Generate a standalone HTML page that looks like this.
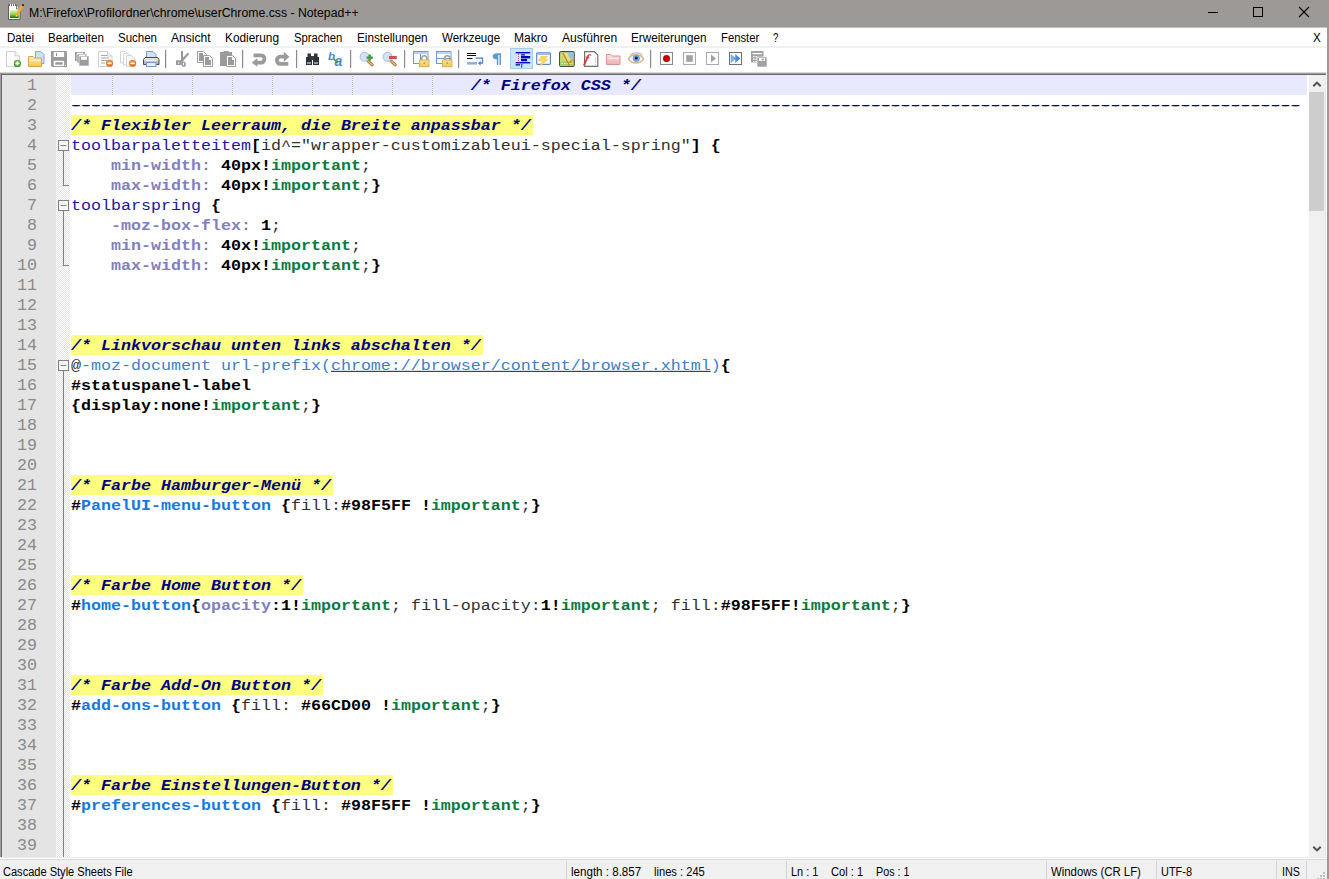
<!DOCTYPE html>
<html lang="de">
<head>
<meta charset="utf-8">
<title>userChrome.css - Notepad++</title>
<style>
html,body{margin:0;padding:0;}
body{width:1329px;height:879px;position:relative;overflow:hidden;background:#fff;font-family:"Liberation Sans",sans-serif;font-size:12px;color:#000;}
.abs{position:absolute;}
#titlebar{left:0;top:0;width:1329px;height:28px;background:linear-gradient(to bottom,#9d9996 0,#9d9996 27px,#c6c3c1 27px,#c6c3c1 28px);}
#title{left:0;top:0;width:600px;height:27px;}
#title span{position:absolute;top:5px;line-height:16px;white-space:nowrap;display:inline-block;transform-origin:0 50%;}
#menubar{left:0;top:28px;width:1327px;height:20px;background:#fff;}
#menubar span{position:absolute;top:2px;line-height:16px;white-space:nowrap;display:inline-block;transform-origin:0 50%;}
#menusep{left:0;top:46px;width:1327px;height:2px;background:#f1f1f1;}
#toolbar{left:0;top:49px;width:1327px;height:23px;background:#fff;}
#rborder{left:1327px;top:27px;width:2px;height:852px;background:#9d9996;}
#edborder-top{left:0;top:72px;width:1326px;height:3px;background:linear-gradient(to bottom,#d8d8d8 0,#d8d8d8 1px,#a0a0a0 1px,#a0a0a0 2px,#696969 2px,#696969 3px);}
#edborder-left{left:0;top:73px;width:2px;height:784px;background:linear-gradient(to right,#a0a0a0 0,#a0a0a0 1px,#696969 1px,#696969 2px);}
#lnmargin{left:2px;top:75px;width:54px;height:782px;background:#e4e4e4;}
#foldmargin{left:56px;top:75px;width:14px;height:782px;background-color:#fff;background-image:conic-gradient(#fff 25%,#e4e4e4 0 50%,#fff 0 75%,#e4e4e4 0);background-size:2px 2px;}
#code{left:70px;top:75px;width:1237px;height:782px;overflow:hidden;background:#fff;}
#curline{left:1px;top:0;width:1236px;height:20px;background:#e8e8ff;}
.ig{position:absolute;top:0;width:1px;height:20px;background:repeating-linear-gradient(to bottom,#fff 0,#fff 1px,#bcbcbc 1px,#bcbcbc 2px);}
.ln{position:absolute;left:2px;width:35px;text-align:right;height:20px;line-height:22px;overflow:hidden;font-family:"Liberation Mono",monospace;font-size:16.6667px;color:#8a8a8a;}
.l{position:absolute;left:1px;height:20px;line-height:22px;transform:scaleY(0.87);transform-origin:0 15px;white-space:pre;font-family:"Liberation Mono",monospace;font-size:16.6667px;color:#000;}
.l span{display:inline-block;height:20px;line-height:22px;vertical-align:top;}
.c{color:#000080;font-weight:bold;font-style:italic;}
.cb{position:absolute;left:1px;height:20px;background:#ffff80;}
.c1{color:#000080;font-weight:bold;font-style:italic;}
.t{color:#1818a0;}
.dash{color:#000080;text-shadow:-1.5px 0 0 #000080,1.5px 0 0 #000080;}
.o{font-weight:bold;color:#000;}
.v{font-weight:bold;color:#000;}
.a{color:#303030;}
.n{color:#303030;}
.i{color:#8080c0;font-weight:bold;}
.p{color:#6c6c9c;}
.m{color:#0a7a40;font-weight:bold;}
.s{color:#303030;}
.d{color:#3c80c8;}
.u{color:#3c80c8;text-decoration:underline;text-decoration-color:#000;}
.k{color:#1478dc;font-weight:bold;}
#vscroll{left:1309px;top:75px;width:17px;height:782px;background:linear-gradient(to right,#f0f0f0 0,#f0f0f0 16px,#e6e6e6 16px,#e6e6e6 17px);}
#vthumb{left:1309px;top:92px;width:15px;height:119px;background:#cdcdcd;}
#statusline{left:0;top:857px;width:1327px;height:3px;background:linear-gradient(to bottom,#ececec 0,#ececec 1px,#fff 1px,#fff 2px,#dadada 2px,#dadada 3px);}
#statusbar{left:0;top:860px;width:1327px;height:19px;background:#f0f0f0;}
#statusbar span{position:absolute;top:4px;line-height:16px;white-space:nowrap;display:inline-block;transform-origin:0 50%;}
.ssep{position:absolute;top:1px;width:1px;height:18px;background:#d4d4d4;}
</style>
</head>
<body>
<div id="titlebar" class="abs"></div>
<div id="title" class="abs"><span style="left:29.0px;transform:scaleX(1.0211)">M:\Firefox\Profilordner\chrome\userChrome.css - Notepad++</span></div>
<svg class="abs" style="left:0;top:0" width="1329" height="28" viewBox="0 0 1329 28">
<defs><linearGradient id="gNpp" x1="0" y1="0" x2="0" y2="1"><stop offset="0" stop-color="#e8f4c0"/><stop offset="0.55" stop-color="#8cd63c"/><stop offset="1" stop-color="#146c08"/></linearGradient></defs>
<path d="M8.500 5.500h8l3.500 3.500v10.500h-11.500z" fill="#fff" stroke="#5c5c5c"/>
<path d="M16.500 5.500v3.500h3.500" fill="#e8e8e8" stroke="#5c5c5c" stroke-width="0.800"/>
<path d="M8.500 5.500v-1h8" fill="none" stroke="#6c6c6c"/><path d="M10.500 4v2.500M12.500 4v2.500M14.500 4v2.500" stroke="#fff" stroke-width="1"/>
<rect x="10" y="10" width="8.800" height="8" fill="url(#gNpp)"/>
<path d="M16.300 15.800l5.800-9.600" stroke="#eeb02c" stroke-width="2.600"/>
<path d="M15.600 17l0.500-2l1.300 0.800z" fill="#f4dca0"/>
<rect x="22" y="4" width="2" height="2" rx="0.600" fill="#a00808"/>
<path d="M1208 12.500h10" stroke="#000" stroke-width="1"/>
<rect x="1253.500" y="7.500" width="9" height="9" fill="none" stroke="#000" stroke-width="1"/>
<path d="M1299 7l10 10M1309 7l-10 10" stroke="#000" stroke-width="1.100"/>
</svg>
<div id="menubar" class="abs"><span style="left:7.2px;transform:scaleX(0.9636)">Datei</span><span style="left:48.2px;transform:scaleX(0.9630)">Bearbeiten</span><span style="left:117.8px;transform:scaleX(0.9582)">Suchen</span><span style="left:171.3px;transform:scaleX(1.0086)">Ansicht</span><span style="left:225.3px;transform:scaleX(0.9868)">Kodierung</span><span style="left:294.2px;transform:scaleX(0.9401)">Sprachen</span><span style="left:357.0px;transform:scaleX(0.9797)">Einstellungen</span><span style="left:442.0px;transform:scaleX(0.9606)">Werkzeuge</span><span style="left:514.3px;transform:scaleX(1.0048)">Makro</span><span style="left:561.9px;transform:scaleX(1.0073)">Ausführen</span><span style="left:631.3px;transform:scaleX(0.9756)">Erweiterungen</span><span style="left:721.2px;transform:scaleX(0.9413)">Fenster</span><span style="left:773.0px;transform:scaleX(0.7922)">?</span><span style="left:1313.0px;transform:scaleX(0.9726)">X</span></div>
<div id="menusep" class="abs"></div>
<div id="toolbar" class="abs"><svg class="abs" style="left:0;top:0;overflow:visible" width="800" height="23" viewBox="0 49 800 23">
<defs>
<linearGradient id="gFolder" x1="0" y1="0" x2="0" y2="1"><stop offset="0" stop-color="#fdf0b4"/><stop offset="1" stop-color="#f2c64a"/></linearGradient>
<linearGradient id="gPink" x1="0" y1="0" x2="0" y2="1"><stop offset="0" stop-color="#fbe0e0"/><stop offset="1" stop-color="#eeb0b0"/></linearGradient>
<linearGradient id="gLock" x1="0" y1="0" x2="0" y2="1"><stop offset="0" stop-color="#fae596"/><stop offset="1" stop-color="#efc656"/></linearGradient>
<linearGradient id="gPrn" x1="0" y1="0" x2="0" y2="1"><stop offset="0" stop-color="#f0f0f0"/><stop offset="1" stop-color="#a8a8a8"/></linearGradient>
<radialGradient id="gGreen" cx="0.5" cy="0.35" r="0.7"><stop offset="0" stop-color="#8ed06a"/><stop offset="1" stop-color="#2e8420"/></radialGradient>
<radialGradient id="gOrange" cx="0.5" cy="0.35" r="0.7"><stop offset="0" stop-color="#f8a050"/><stop offset="1" stop-color="#dc5c10"/></radialGradient>
<linearGradient id="gBlueTri" x1="0" y1="0" x2="1" y2="0"><stop offset="0" stop-color="#9cc4f4"/><stop offset="1" stop-color="#2868c8"/></linearGradient>
</defs>
<!-- 1 new -->
<g>
<path d="M6.5 51.5h8.5l4.5 4.5v10.5h-13z" fill="#fdfdfd" stroke="#cfcfcf"/>
<path d="M15 51.5v4.5h4.5" fill="#f0f0f0" stroke="#cfcfcf"/>
<circle cx="17.4" cy="63.4" r="3.6" fill="url(#gGreen)"/>
<path d="M15.4 63.4h4M17.4 61.4v4" stroke="#fff" stroke-width="1.5"/>
</g>
<!-- 2 open -->
<g>
<path d="M35.5 51.5h5.5l3 3v9h-8.500z" fill="#cfe2fa" stroke="#7ea6e0"/>
<path d="M28.500 66.500v-10h4.500l1.500 1.500h7v8.500z" fill="url(#gFolder)" stroke="#d9a441"/>
<path d="M29.500 60.500h11.500" stroke="#fdf4c8"/>
</g>
<!-- 3 save -->
<g>
<path d="M51 51h15l1 1v15h-15l-1-1z" fill="#9b9b9b"/>
<rect x="53.700" y="52" width="10.400" height="5" fill="#fff"/>
<rect x="56" y="53" width="1" height="3" fill="#8a8a8a"/>
<rect x="53.700" y="60.800" width="10.400" height="5.200" fill="#fff"/>
<rect x="55.300" y="62.200" width="7.400" height="2.500" fill="#9b9b9b"/>
<rect x="65" y="65" width="1" height="1" fill="#fff"/>
</g>
<!-- 4 save all -->
<g fill="#9b9b9b">
<rect x="75" y="52" width="10" height="9"/>
<rect x="77" y="54" width="10" height="9" stroke="#fff" stroke-width="0.600"/>
<rect x="79" y="56" width="10" height="10" stroke="#fff" stroke-width="0.600"/>
<rect x="77" y="52.800" width="6" height="1.200" fill="#fff"/>
<rect x="79" y="54.800" width="6" height="1.200" fill="#fff"/>
<rect x="81" y="56.800" width="6" height="3" fill="#fff"/>
</g>
<!-- 5 close -->
<g>
<path d="M98.500 51.500h9l4.500 4.500v10.500h-13.500z" fill="#fdfdfd" stroke="#cfcfcf"/>
<path d="M107.500 51.500v4.500h4.500" fill="#f0f0f0" stroke="#cfcfcf"/>
<path d="M101 55.500h6M101 58h8M101 60.500h6M101 63h4" stroke="#a8a8a8"/>
<circle cx="109.500" cy="63.300" r="3.500" fill="url(#gOrange)"/>
<rect x="107.400" y="62.600" width="4.200" height="1.500" fill="#fff"/>
</g>
<!-- 6 close all -->
<g>
<path d="M120.500 51.500h5l3 3v8.500h-8z" fill="#fdfdfd" stroke="#d4d4d4"/>
<path d="M123.500 53.500h5l3 3v8.500h-8z" fill="#fdfdfd" stroke="#d4d4d4"/>
<path d="M126.500 55.500h5l3.500 3.500v7.500h-8.500z" fill="#fdfdfd" stroke="#d4d4d4"/>
<circle cx="132.600" cy="63.300" r="3.500" fill="url(#gOrange)"/>
<rect x="130.500" y="62.600" width="4.200" height="1.500" fill="#fff"/>
</g>
<!-- 7 print -->
<g>
<path d="M146.500 58v-6.500h6.500l3 3v3.500z" fill="#cfe2fa" stroke="#6e9ad6"/>
<path d="M145 57.500h12.500l1.500 2v5h-15.500v-5z" fill="url(#gPrn)" stroke="#4a4a4a"/>
<rect x="146.500" y="62.500" width="9.500" height="4" fill="#e4f0fc" stroke="#6e9ad6"/>
<path d="M146 60.500h10.500" stroke="#fff"/>
</g>
<rect x="165" y="50" width="1.200" height="18" fill="#8a8a8a"/>
<!-- 8 cut -->
<g fill="#9b9b9b">
<rect x="181" y="51" width="2" height="10.500"/>
<path d="M187.900 52.600l1.300 1.300l-8.200 9.600l-2.200-1.800z"/>
<path d="M176 60.200h3.500l1.800 1.800v3h-5.300zM178 62.200v1.200h1.300v-1.200z" fill-rule="evenodd"/>
<path d="M181.300 61.500h3l1.500 1.500v2.800l-1 1h-2l-1.500-1.500zM182.900 62.800v2.200h1.200v-2.200z" fill-rule="evenodd"/>
</g>
<!-- 9 copy -->
<g>
<path d="M197.500 51.500h6l3 3v8h-9z" fill="#fff" stroke="#9b9b9b"/>
<path d="M199 53h4v3h2v5h-6z" fill="#9b9b9b"/>
<path d="M203.500 55.500h6l3 3v8h-9z" fill="#fff" stroke="#9b9b9b"/>
<path d="M205 57h4v3h2v5h-6z" fill="#9b9b9b"/>
</g>
<!-- 10 paste -->
<g>
<path d="M220 52h3.500v-1h5.200v1h3.300v14h-12z" fill="#9b9b9b"/>
<path d="M226.500 55.500h6l3 3v8h-9z" fill="#fff" stroke="#9b9b9b"/>
<path d="M228 57h4v3h2v5h-6z" fill="#9b9b9b"/>
</g>
<rect x="242" y="50" width="1.200" height="18" fill="#8a8a8a"/>
<!-- 11 undo -->
<g fill="#9b9b9b">
<path d="M253.500 53.500H261.500A4.800 5.500 0 0 1 261.500 64.500H256.500V60.700H261A1.600 1.700 0 0 0 261 57.300H253.500z"/>
<path d="M251.800 62.600l5.600-4.400v8.800z"/>
</g>
<!-- 12 redo -->
<g fill="#9b9b9b">
<path d="M286 54.800H280A5 5.500 0 0 0 280 65.800H288.300V62H280.500A1.600 1.700 0 0 1 280.500 58.600H286z"/>
<path d="M289.400 56.700l-5.600-5v10z"/>
</g>
<rect x="296" y="50" width="1.200" height="18" fill="#8a8a8a"/>
<!-- 13 find -->
<g>
<path d="M307.500 53.500h3.500v3.500h-3.500zM314 53.500h3.500v3.500h-3.500z" fill="#30363c"/>
<path d="M306 57h6v8h-6zM313 57h6v8h-6z" fill="#2c3238"/>
<rect x="311" y="56" width="3" height="4" fill="#3a4048"/>
<path d="M307 62h4v2h-4zM314 62h4v2h-4z" fill="#8c98a8"/>
</g>
<!-- 14 replace -->
<g font-family="Liberation Sans,sans-serif" font-weight="bold" font-style="italic" fill="#4a88d8">
<text x="328" y="59.500" font-size="11.500">b</text>
<text x="334.500" y="66.300" font-size="14">a</text>
<path d="M333.500 58.500l3.500 3.500" stroke="#3c9c3c" stroke-width="1.600"/>
<path d="M338.200 63.200l-3.400-0.800 2.600-2.600z" fill="#3c9c3c"/>
</g>
<rect x="350" y="50" width="1.200" height="18" fill="#8a8a8a"/>
<!-- 15 zoom in -->
<g>
<path d="M368 61l4.200 3.800" stroke="#9a6a30" stroke-width="3" stroke-linecap="round"/>
<path d="M368 61l4.200 3.800" stroke="#e4b070" stroke-width="1.600" stroke-linecap="round"/>
<circle cx="364.600" cy="56.800" r="4.500" fill="#d4e2f8" stroke="#a4bce4"/>
<path d="M366.500 57.600h6.400M369.700 54.400v6.400" stroke="#3c9c3c" stroke-width="2.400"/>
</g>
<!-- 16 zoom out -->
<g>
<path d="M391 61l4.200 3.800" stroke="#9a6a30" stroke-width="3" stroke-linecap="round"/>
<path d="M391 61l4.200 3.800" stroke="#e4b070" stroke-width="1.600" stroke-linecap="round"/>
<circle cx="387.600" cy="56.800" r="4.500" fill="#d4e2f8" stroke="#a4bce4"/>
<rect x="389.400" y="56.200" width="7" height="2.600" fill="#e04848" stroke="#c03030" stroke-width="0.500"/>
</g>
<rect x="404" y="50" width="1.200" height="18" fill="#8a8a8a"/>
<!-- 17 sync v -->
<g>
<rect x="413.500" y="51.500" width="14.500" height="12" fill="#fff" stroke="#6e9ad6"/>
<rect x="414" y="52" width="13.500" height="2" fill="#bcd4f4"/>
<path d="M420.500 54v9.500" stroke="#6e9ad6"/>
<path d="M421.800 60v-1.800a2.500 2.500 0 0 1 5 0v1.800" fill="none" stroke="#a4a4a4" stroke-width="1.600"/>
<rect x="419.500" y="60" width="9.500" height="6.800" fill="url(#gLock)" stroke="#d8a83c" stroke-width="0.800"/>
<rect x="423.500" y="62.300" width="1.600" height="1.600" fill="#c89430"/>
</g>
<!-- 18 sync h -->
<g>
<rect x="436.500" y="51.500" width="14.500" height="12" fill="#fff" stroke="#6e9ad6"/>
<rect x="437" y="52" width="13.500" height="2" fill="#bcd4f4"/>
<path d="M436.500 58.500h14.500" stroke="#6e9ad6"/>
<path d="M444.800 60v-1.800a2.500 2.500 0 0 1 5 0v1.800" fill="none" stroke="#a4a4a4" stroke-width="1.600"/>
<rect x="442.500" y="60" width="9.500" height="6.800" fill="url(#gLock)" stroke="#d8a83c" stroke-width="0.800"/>
<rect x="446.500" y="62.300" width="1.600" height="1.600" fill="#c89430"/>
</g>
<rect x="458" y="50" width="1.200" height="18" fill="#8a8a8a"/>
<!-- 19 wrap -->
<g>
<path d="M467 53.500h9M467 55.500h9M467 58.500h5.500" stroke="#101010" stroke-width="1"/>
<rect x="467" y="62" width="10" height="2.600" fill="#8cb0e4"/>
<path d="M475.500 58.200h7v5h-3" fill="none" stroke="#4c7cc8" stroke-width="1.200"/>
<path d="M478 63.200l2.600-2.400v4.800z" fill="#4c7cc8"/>
</g>
<!-- 20 pilcrow -->
<g fill="#5b9bd5">
<path d="M497 53.500h4v1.500h-4z"/>
<path d="M497.200 53.500v5.700a3 2.850 0 0 1 0-5.700z"/>
<path d="M495.700 53.500h1.500v5.700h-1.500a2.900 2.850 0 0 1 0-5.700z"/>
<rect x="496.800" y="53.500" width="1.500" height="11.500"/>
<rect x="499.500" y="53.500" width="1.500" height="11.500"/>
</g>
<!-- 21 indent guide (active) -->
<g>
<rect x="510.500" y="48.500" width="22" height="20" fill="#cce4f7" stroke="#a4cdf0"/>
<g fill="#0000c0">
<rect x="515.700" y="52" width="14.500" height="1.400"/>
<rect x="521" y="54.300" width="4" height="1.200"/>
<rect x="521" y="56" width="9.200" height="2.400"/>
<rect x="521" y="59" width="6" height="2.200"/>
<rect x="515.700" y="62" width="14.500" height="1.400"/>
<rect x="515.700" y="64.200" width="4.300" height="1.300"/>
<rect x="521" y="64.200" width="1.400" height="1.300"/>
<rect x="521" y="66.200" width="1.200" height="1.200"/>
</g>
<path d="M518.500 54v8" stroke="#e0487c" stroke-width="1" stroke-dasharray="1 1"/>
</g>
<!-- 22 UDL -->
<g>
<rect x="536.700" y="52.800" width="13.700" height="11.500" rx="0.800" fill="#fff" stroke="#6288c4" stroke-width="1.200"/>
<rect x="537.300" y="53.400" width="12.500" height="1.500" fill="#8eb6ee"/>
<path d="M548 56h-7l-3 5h4.500l-2.700 5.200l8.700-6.700h-3.500z" fill="#f6d962" stroke="#eec850" stroke-width="0.400"/>
</g>
<!-- 23 doc map -->
<g>
<rect x="559.600" y="51.600" width="14.600" height="14.800" rx="1.500" fill="#dfe47c" stroke="#4c4c4c" stroke-width="1.200"/>
<path d="M560.500 52.500h3l4 9.500v3.500h-7z" fill="#c4dc70"/>
<path d="M567.500 52.500h6v6h-4z" fill="#92c2f0"/>
<path d="M560.500 61.500h13v4h-13z" fill="#98d468"/>
<path d="M561.500 63.500h11" stroke="#e8f4d8" stroke-width="1" stroke-dasharray="1.500 1"/>
<path d="M563 53l6.300 12.500M568.500 63.500l4-4" stroke="#e07a24" stroke-width="1.300" fill="none"/>
</g>
<!-- 24 function list -->
<g>
<path d="M584.600 51.600h9.700l3.500 3.500v11.300h-13.200z" fill="#fff" stroke="#707070" stroke-width="1.200"/>
<path d="M595.500 58v6.500l-1.500 1h-3" stroke="#c4c4c4" stroke-dasharray="1.500 1.500" fill="none"/>
<text x="584.500" y="63.500" transform="rotate(14 588 60)" font-family="Liberation Serif,serif" font-style="italic" font-weight="bold" font-size="13.500" fill="#e03c3c">f</text>
</g>
<!-- 25 folder workspace -->
<g>
<path d="M606.500 64.500v-10h4.500l1.500 1.500h7.500v8.500z" fill="url(#gPink)" stroke="#dc9494"/>
<path d="M607.500 58.500h11.500" stroke="#fdf0f0"/>
</g>
<!-- 26 eye -->
<g>
<path d="M628.500 58.800c3-5.500 12-5.500 15 0c-3 5.500 -12 5.500 -15 0z" fill="#fdfdfd" stroke="#d8b48c" stroke-width="1.400"/>
<circle cx="636.300" cy="58.300" r="3.600" fill="#78a4dc"/>
<circle cx="636.300" cy="58" r="1.600" fill="#202838"/>
<path d="M630 55c3.500-2.800 9.500-2.800 12.500 0" fill="none" stroke="#b0a8a0" stroke-width="1"/>
</g>
<rect x="650" y="50" width="1.200" height="18" fill="#8a8a8a"/>
<!-- 27 record -->
<rect x="660.500" y="52.500" width="12" height="12" fill="#fff" stroke="#8a8a8a"/>
<circle cx="666.500" cy="58.500" r="3.500" fill="#c40000"/>
<!-- 28 stop -->
<rect x="683.500" y="52.500" width="12" height="12" fill="#fff" stroke="#ababab"/>
<rect x="686.200" y="55.200" width="6.600" height="6.600" fill="#a2a2a2"/>
<!-- 29 play -->
<rect x="706.500" y="52.500" width="12" height="12" fill="#fff" stroke="#ababab"/>
<path d="M711 54.500l5 4l-5 4z" fill="#a2a2a2"/>
<!-- 30 ff -->
<rect x="729.500" y="52.500" width="12" height="12" fill="#fff" stroke="#707070"/>
<path d="M731 54.500l4.500 4l-4.500 4zM735.500 54.500l4.500 4l-4.500 4z" fill="url(#gBlueTri)" stroke="#3070d0" stroke-width="0.400"/>
<!-- 31 save macro -->
<g fill="#a2a2a2">
<rect x="751" y="51" width="12.500" height="11.500"/>
<rect x="752.500" y="53" width="9.500" height="1.200" fill="#fff"/>
<path d="M753 56h1.500v1.200h-1.500zM755.500 56h1.500v1.200h-1.500zM753 58.500h1.500v1.200h-1.500zM755.500 58.500h1.500v1.200h-1.500zM753 61h1.500v1.200h-1.500zM755.500 61h1.500v1.200h-1.500z" fill="#fff"/>
<rect x="757" y="57" width="10" height="10" stroke="#fff" stroke-width="0.600"/>
<rect x="759" y="58" width="6" height="3" fill="#fff"/>
<rect x="761.500" y="58.600" width="2.500" height="1.800" fill="#a2a2a2"/>
</g>
</svg>
</div>
<div id="edborder-top" class="abs"></div>
<div id="edborder-left" class="abs"></div>
<div id="lnmargin" class="abs"></div>
<div id="foldmargin" class="abs"></div>
<svg class="abs" style="left:0;top:0" width="72" height="879" viewBox="0 0 72 879"><rect x="58.500" y="140.5" width="10" height="10" fill="#f6f6f6" stroke="#808080"/><rect x="60.500" y="145" width="6" height="1" fill="#808080"/><rect x="63" y="151" width="1" height="35" fill="#808080"/><rect x="63" y="185" width="6" height="1" fill="#808080"/><rect x="58.500" y="200.5" width="10" height="10" fill="#f6f6f6" stroke="#808080"/><rect x="60.500" y="205" width="6" height="1" fill="#808080"/><rect x="63" y="211" width="1" height="55" fill="#808080"/><rect x="63" y="265" width="6" height="1" fill="#808080"/><rect x="58.500" y="360.5" width="10" height="10" fill="#f6f6f6" stroke="#808080"/><rect x="60.500" y="365" width="6" height="1" fill="#808080"/><rect x="63" y="371" width="1" height="486" fill="#808080"/></svg>
<div class="ln" style="top:75px">1</div>
<div class="ln" style="top:95px">2</div>
<div class="ln" style="top:115px">3</div>
<div class="ln" style="top:135px">4</div>
<div class="ln" style="top:155px">5</div>
<div class="ln" style="top:175px">6</div>
<div class="ln" style="top:195px">7</div>
<div class="ln" style="top:215px">8</div>
<div class="ln" style="top:235px">9</div>
<div class="ln" style="top:255px">10</div>
<div class="ln" style="top:275px">11</div>
<div class="ln" style="top:295px">12</div>
<div class="ln" style="top:315px">13</div>
<div class="ln" style="top:335px">14</div>
<div class="ln" style="top:355px">15</div>
<div class="ln" style="top:375px">16</div>
<div class="ln" style="top:395px">17</div>
<div class="ln" style="top:415px">18</div>
<div class="ln" style="top:435px">19</div>
<div class="ln" style="top:455px">20</div>
<div class="ln" style="top:475px">21</div>
<div class="ln" style="top:495px">22</div>
<div class="ln" style="top:515px">23</div>
<div class="ln" style="top:535px">24</div>
<div class="ln" style="top:555px">25</div>
<div class="ln" style="top:575px">26</div>
<div class="ln" style="top:595px">27</div>
<div class="ln" style="top:615px">28</div>
<div class="ln" style="top:635px">29</div>
<div class="ln" style="top:655px">30</div>
<div class="ln" style="top:675px">31</div>
<div class="ln" style="top:695px">32</div>
<div class="ln" style="top:715px">33</div>
<div class="ln" style="top:735px">34</div>
<div class="ln" style="top:755px">35</div>
<div class="ln" style="top:775px">36</div>
<div class="ln" style="top:795px">37</div>
<div class="ln" style="top:815px">38</div>
<div class="ln" style="top:835px">39</div>
<div id="code" class="abs">
<div id="curline" class="abs"></div>
<div class="ig" style="left:42px"></div><div class="ig" style="left:82px"></div><div class="ig" style="left:122px"></div><div class="ig" style="left:162px"></div><div class="ig" style="left:202px"></div><div class="ig" style="left:242px"></div><div class="ig" style="left:282px"></div><div class="ig" style="left:322px"></div><div class="ig" style="left:362px"></div>
<div class="l" style="top:0px"><span class="n">                                        </span><span class="c1">/* Firefox CSS */</span></div>
<div class="l" style="top:20px"><span class="dash">---------------------------------------------------------------------------------------------------------------------------</span></div>
<div class="cb" style="top:40px;width:462px"></div>
<div class="l" style="top:40px"><span class="c">/* Flexibler Leerraum, die Breite anpassbar */</span></div>
<div class="l" style="top:60px"><span class="t">toolbarpaletteitem</span><span class="o">[</span><span class="a">id^="wrapper-customizableui-special-spring"</span><span class="o">]</span><span class="n"> </span><span class="o">{</span></div>
<div class="l" style="top:80px"><span class="n">    </span><span class="i">min-width</span><span class="p">:</span><span class="n"> </span><span class="v">40px</span><span class="o">!</span><span class="m">important</span><span class="s">;</span></div>
<div class="l" style="top:100px"><span class="n">    </span><span class="i">max-width</span><span class="p">:</span><span class="n"> </span><span class="v">40px</span><span class="o">!</span><span class="m">important</span><span class="s">;</span><span class="o">}</span></div>
<div class="l" style="top:120px"><span class="t">toolbarspring</span><span class="n"> </span><span class="o">{</span></div>
<div class="l" style="top:140px"><span class="n">    </span><span class="i">-moz-box-flex</span><span class="p">:</span><span class="n"> </span><span class="v">1</span><span class="s">;</span></div>
<div class="l" style="top:160px"><span class="n">    </span><span class="i">min-width</span><span class="p">:</span><span class="n"> </span><span class="v">40x</span><span class="o">!</span><span class="m">important</span><span class="s">;</span></div>
<div class="l" style="top:180px"><span class="n">    </span><span class="i">max-width</span><span class="p">:</span><span class="n"> </span><span class="v">40px</span><span class="o">!</span><span class="m">important</span><span class="s">;</span><span class="o">}</span></div>
<div class="cb" style="top:260px;width:412px"></div>
<div class="l" style="top:260px"><span class="c">/* Linkvorschau unten links abschalten */</span></div>
<div class="l" style="top:280px"><span class="n">@</span><span class="d">-moz-document url-prefix(</span><span class="u">chrome://browser/content/browser.xhtml</span><span class="d">)</span><span class="o">{</span></div>
<div class="l" style="top:300px"><span class="o">#statuspanel-label</span></div>
<div class="l" style="top:320px"><span class="o">{display:none!</span><span class="m">important</span><span class="s">;</span><span class="o">}</span></div>
<div class="cb" style="top:400px;width:262px"></div>
<div class="l" style="top:400px"><span class="c">/* Farbe Hamburger-Menü */</span></div>
<div class="l" style="top:420px"><span class="o">#</span><span class="k">PanelUI-menu-button</span><span class="n"> </span><span class="o">{</span><span class="n">fill:</span><span class="v">#98F5FF</span><span class="n"> </span><span class="o">!</span><span class="m">important</span><span class="s">;</span><span class="o">}</span></div>
<div class="cb" style="top:500px;width:232px"></div>
<div class="l" style="top:500px"><span class="c">/* Farbe Home Button */</span></div>
<div class="l" style="top:520px"><span class="o">#</span><span class="k">home-button</span><span class="o">{</span><span class="i">opacity</span><span class="o">:</span><span class="v">1</span><span class="o">!</span><span class="m">important</span><span class="s">;</span><span class="n"> fill-opacity:</span><span class="v">1</span><span class="o">!</span><span class="m">important</span><span class="s">;</span><span class="n"> fill:</span><span class="v">#98F5FF</span><span class="o">!</span><span class="m">important</span><span class="s">;</span><span class="o">}</span></div>
<div class="cb" style="top:600px;width:252px"></div>
<div class="l" style="top:600px"><span class="c">/* Farbe Add-On Button */</span></div>
<div class="l" style="top:620px"><span class="o">#</span><span class="k">add-ons-button</span><span class="n"> </span><span class="o">{</span><span class="n">fill: </span><span class="v">#66CD00</span><span class="n"> </span><span class="o">!</span><span class="m">important</span><span class="s">;</span><span class="o">}</span></div>
<div class="cb" style="top:700px;width:322px"></div>
<div class="l" style="top:700px"><span class="c">/* Farbe Einstellungen-Button */</span></div>
<div class="l" style="top:720px"><span class="o">#</span><span class="k">preferences-button</span><span class="n"> </span><span class="o">{</span><span class="n">fill: </span><span class="v">#98F5FF</span><span class="n"> </span><span class="o">!</span><span class="m">important</span><span class="s">;</span><span class="o">}</span></div>
</div>
<div id="vscroll" class="abs"></div>
<div id="vthumb" class="abs"></div>
<div id="statusline" class="abs"></div>
<div id="statusbar" class="abs"><span style="left:2.7px;transform:scaleX(0.9208)">Cascade Style Sheets File</span><span style="left:571.4px;transform:scaleX(0.9652)">length : 8.857</span><span style="left:653.5px;transform:scaleX(0.9287)">lines : 245</span><span style="left:791.3px;transform:scaleX(0.9124)">Ln : 1</span><span style="left:831.1px;transform:scaleX(0.9282)">Col : 1</span><span style="left:876.2px;transform:scaleX(0.8967)">Pos : 1</span><span style="left:1051.1px;transform:scaleX(0.9494)">Windows (CR LF)</span><span style="left:1161.3px;transform:scaleX(0.9118)">UTF-8</span><span style="left:1281.7px;transform:scaleX(0.8941)">INS</span><i class="ssep" style="left:566px"></i><i class="ssep" style="left:786px"></i><i class="ssep" style="left:1046px"></i><i class="ssep" style="left:1156px"></i><i class="ssep" style="left:1276px"></i><i class="ssep" style="left:1306px"></i></div>
<svg class="abs" style="left:1309px;top:75px" width="17" height="782" viewBox="0 0 17 782">
<path d="M4.300 11.300l3.700-3.700l3.700 3.700" fill="none" stroke="#505050" stroke-width="2"/>
<path d="M4.300 771.700l3.700 3.700l3.700-3.700" fill="none" stroke="#505050" stroke-width="2"/>
</svg>
<svg class="abs" style="left:1309px;top:862px" width="18" height="17" viewBox="0 0 18 17">
<g fill="#bcbcbc"><rect x="14" y="10" width="2" height="2"/><rect x="11" y="13" width="2" height="2"/><rect x="14" y="13" width="2" height="2"/><rect x="8" y="16" width="2" height="2"/><rect x="11" y="16" width="2" height="2"/><rect x="14" y="16" width="2" height="2"/></g>
</svg>
<div id="rborder" class="abs"></div>
</body>
</html>
